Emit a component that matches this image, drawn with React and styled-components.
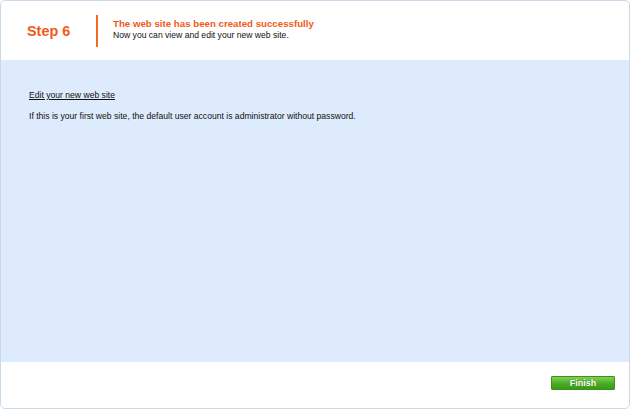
import React from "react";
import styled, { createGlobalStyle } from "styled-components";

const Global = createGlobalStyle`
  html, body { margin: 0; padding: 0; background: #ffffff; }
  body { font-family: "Liberation Sans", Arial, sans-serif; font-size: 8.6px; color: #000; }
`;

const Frame = styled.div`
  width: 630px;
  height: 409px;
  box-sizing: border-box;
  border: 1px solid #c9d9ea;
  border-radius: 5px;
  display: flex;
  flex-direction: column;
  overflow: hidden;
  background: #ffffff;
`;

const Header = styled.div`
  height: 59px;
  display: flex;
  align-items: center;
  flex-shrink: 0;
`;

const Step = styled.div`
  width: 95px;
  box-sizing: border-box;
  padding-left: 26px;
  font-size: 14.4px;
  font-weight: 700;
  color: #f15a1a;
`;

const Divider = styled.div`
  width: 2px;
  height: 32px;
  background: #f26a22;
  margin-right: 15px;
`;

const Titles = styled.div`
  display: flex;
  flex-direction: column;
  gap: 1px;
  margin-top: -4px;
`;

const Title = styled.div`
  font-size: 9.7px;
  font-weight: 700;
  color: #f15a1a;
`;

const Sub = styled.div`
  font-size: 8.6px;
  color: #111;
`;

const Body = styled.div`
  flex: 1;
  background: #deebfc;
  padding: 30px 28px 0;
  display: flex;
  flex-direction: column;
  gap: 11px;
`;

const Link = styled.a`
  color: #111;
  text-decoration: underline;
  cursor: pointer;
`;

const Note = styled.div`
  color: #111;
`;

const Footer = styled.div`
  height: 46px;
  flex-shrink: 0;
  display: flex;
  align-items: flex-start;
  justify-content: flex-end;
  padding-right: 14px;
  padding-top: 14px;
  box-sizing: border-box;
`;

const Button = styled.button`
  width: 64px;
  height: 14px;
  padding: 0;
  border: 1px solid #3d8f1e;
  border-radius: 1px;
  background: linear-gradient(#7fd24f, #4aac24 55%, #3a9818);
  color: #ffffff;
  font-family: "Liberation Sans", Arial, sans-serif;
  font-size: 9px;
  font-weight: 700;
  line-height: 12px;
  text-shadow: 0 0 1px #2c6d12;
`;

export default function App() {
  return (
    <>
      <Global />
      <Frame>
        <Header>
          <Step>Step 6</Step>
          <Divider />
          <Titles>
            <Title>The web site has been created successfully</Title>
            <Sub>Now you can view and edit your new web site.</Sub>
          </Titles>
        </Header>
        <Body>
          <div>
            <Link>Edit your new web site</Link>
          </div>
          <Note>
            If this is your first web site, the default user account is administrator without password.
          </Note>
        </Body>
        <Footer>
          <Button>Finish</Button>
        </Footer>
      </Frame>
    </>
  );
}
